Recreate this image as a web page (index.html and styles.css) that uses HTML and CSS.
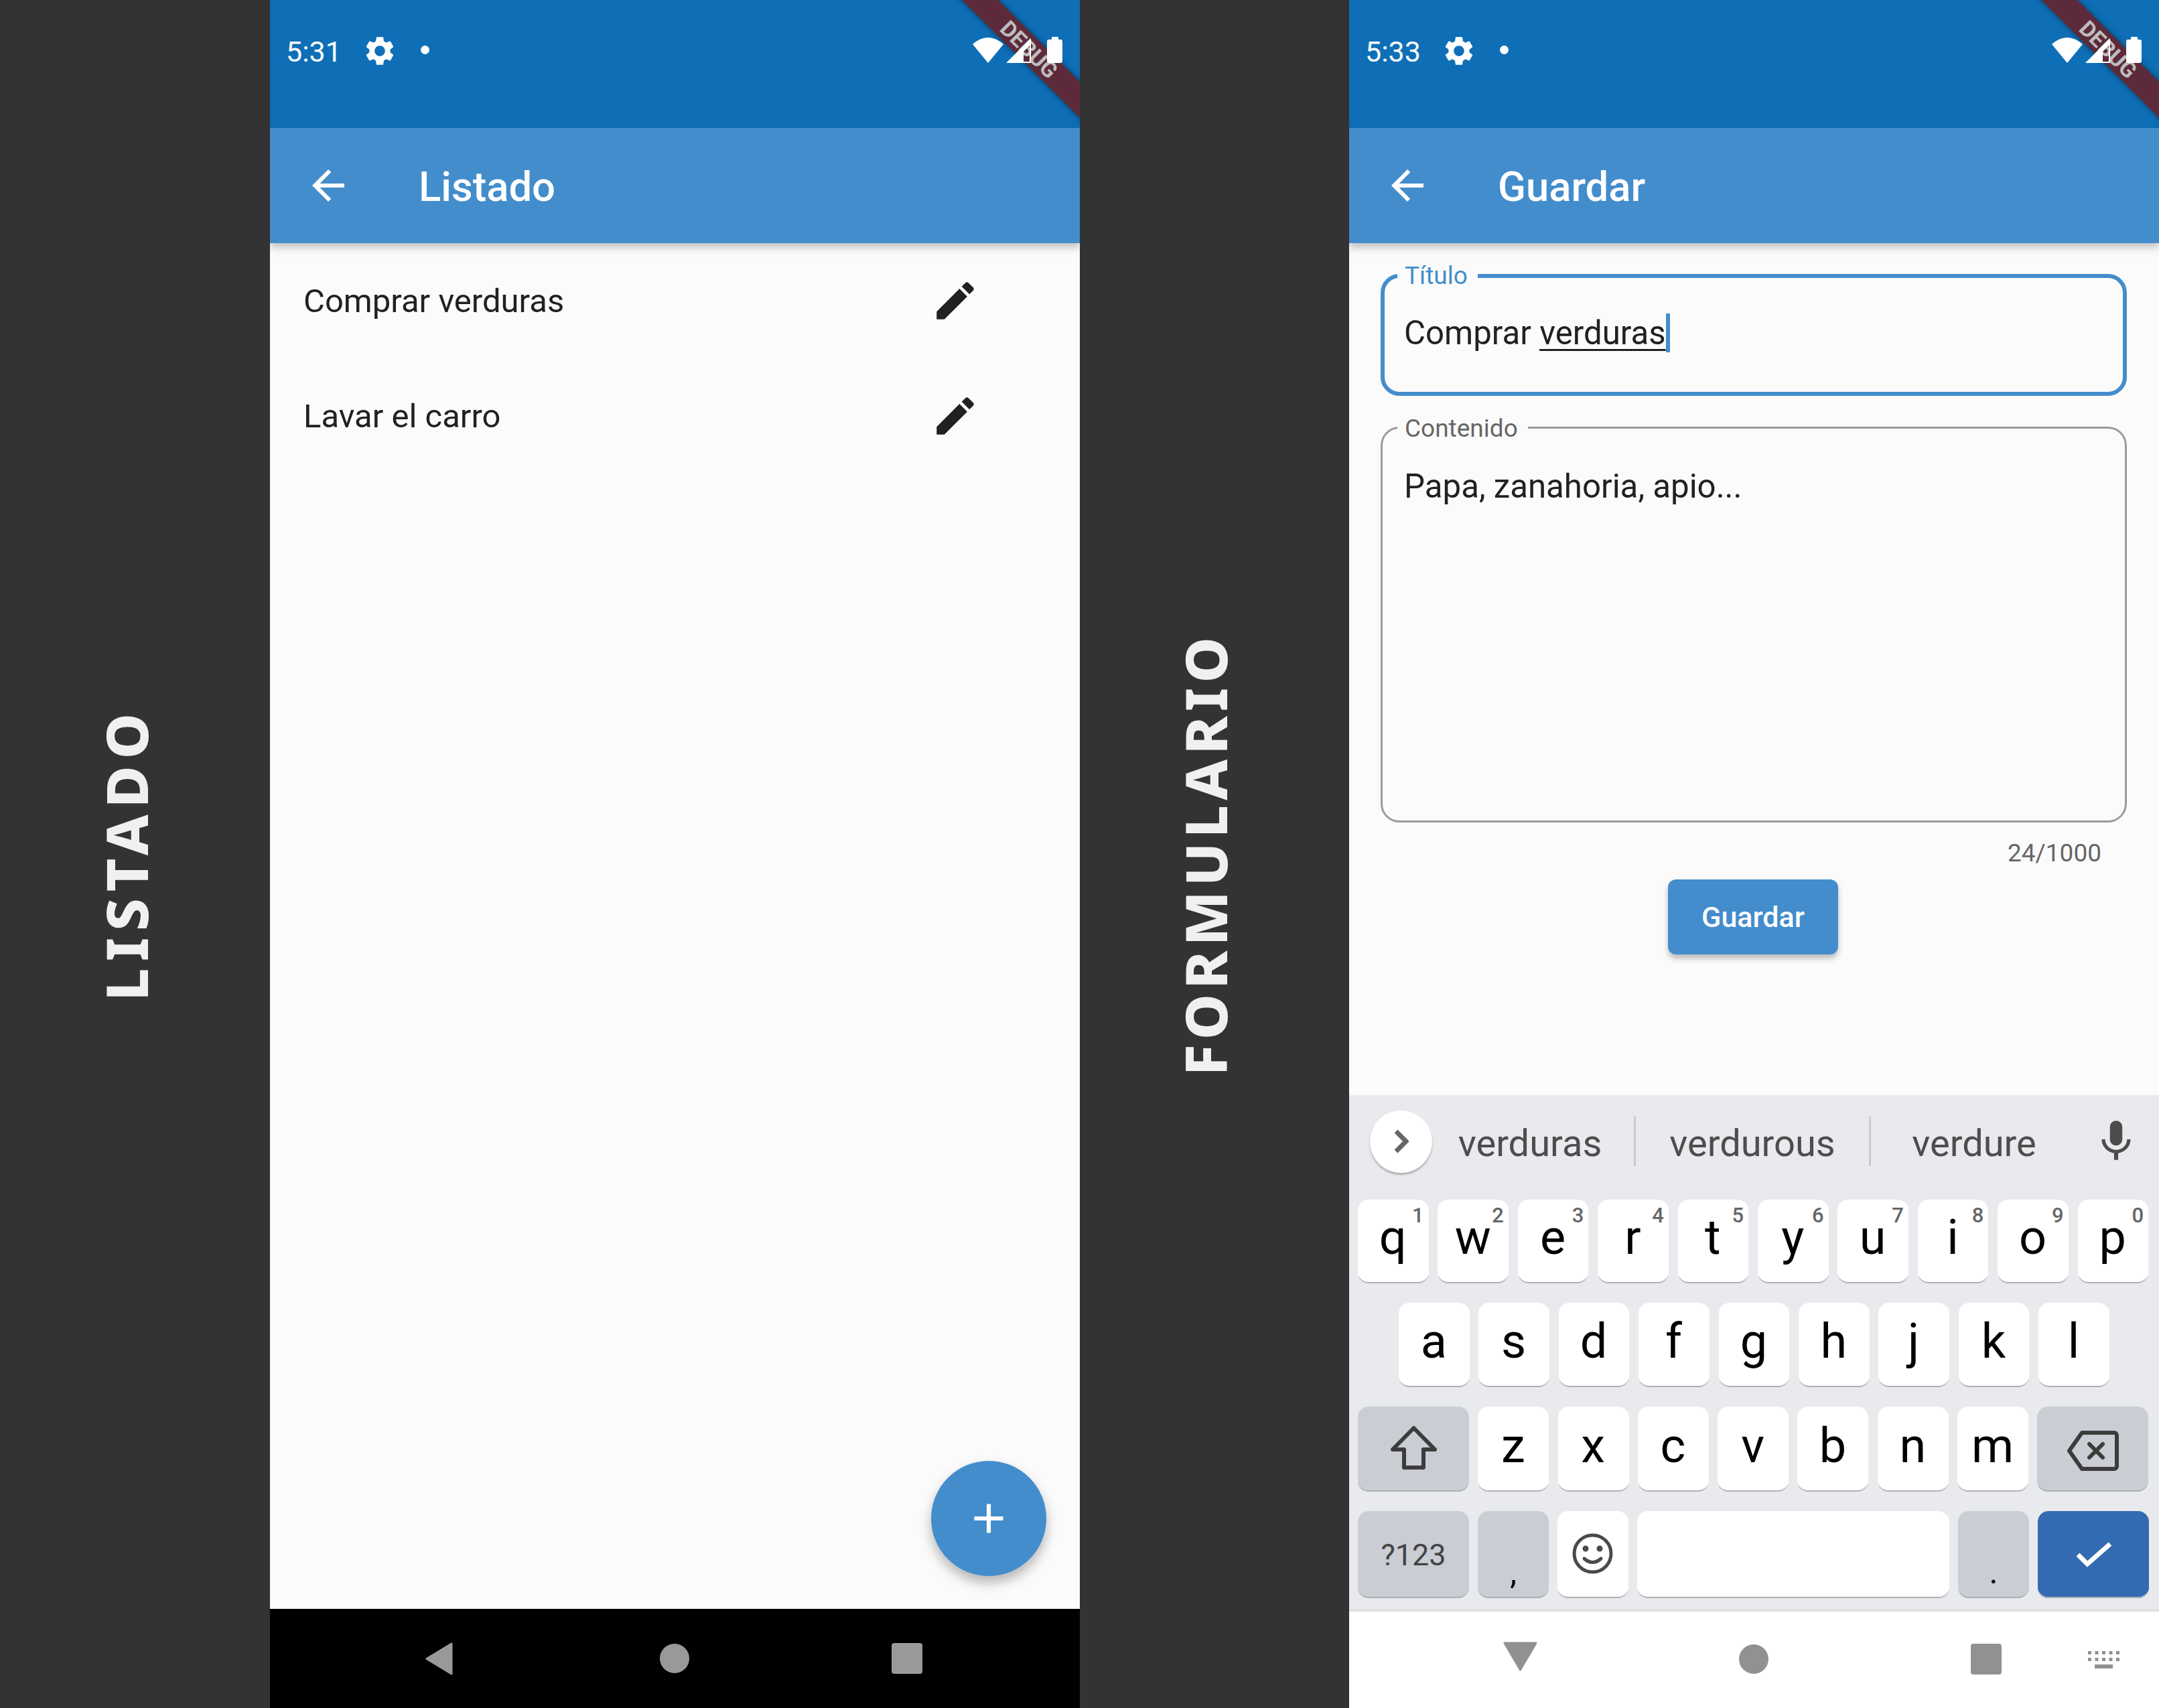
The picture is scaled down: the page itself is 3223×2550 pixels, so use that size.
FILE: index.html
```html
<!DOCTYPE html>
<html lang="es">
<head>
  <meta charset="UTF-8" />
  <title>Listado y formulario</title>
  <link rel="stylesheet" href="styles.css">
</head>
<body>
  <div class="lamina">
    <div class="rotulo rotulo-corto"><span>LISTADO</span></div>

    <!-- Pantalla 1: listado -->
    <section class="telefono">
      <div class="debug"><span>DEBUG</span></div>
      <div class="estado">
        <span class="hora">5:31</span>
        <svg class="engranaje" viewBox="0 0 24 24"><path d="M19.14 12.94c.04-.3.06-.61.06-.94 0-.32-.02-.64-.07-.94l2.03-1.58c.18-.14.23-.41.12-.61l-1.92-3.32c-.12-.22-.37-.29-.59-.22l-2.39.96c-.5-.38-1.03-.7-1.62-.94l-.36-2.54c-.04-.24-.24-.41-.48-.41h-3.84c-.24 0-.43.17-.47.41l-.36 2.54c-.59.24-1.13.57-1.62.94l-2.39-.96c-.22-.08-.47 0-.59.22L2.74 8.87c-.12.21-.08.47.12.61l2.03 1.58c-.05.3-.09.63-.09.94s.02.64.07.94l-2.03 1.58c-.18.14-.23.41-.12.61l1.92 3.32c.12.22.37.29.59.22l2.39-.96c.5.38 1.03.7 1.62.94l.36 2.54c.05.24.24.41.48.41h3.84c.24 0 .44-.17.47-.41l.36-2.54c.59-.24 1.13-.56 1.62-.94l2.39.96c.22.08.47 0 .59-.22l1.92-3.32c.12-.22.07-.47-.12-.61l-2.01-1.58zM12 15.6c-1.98 0-3.6-1.62-3.6-3.6s1.62-3.6 3.6-3.6 3.6 1.62 3.6 3.6-1.62 3.6-3.6 3.6z"/></svg>
        <span class="punto"></span>
        <svg class="senales" viewBox="0 0 134 40"><path d="M0 11Q23-9 46 11L23 39Z"/><path fill-rule="evenodd" d="M50 39L87 2V39ZM76 37H85V13L76 22Z"/><rect x="118" y="0" width="10" height="6" rx="1"/><rect x="111" y="4" width="23" height="35" rx="3"/></svg>
      </div>
      <header class="barra">
        <svg class="icono-barra" viewBox="0 0 24 24"><path d="M20 11H7.83l5.59-5.59L12 4l-8 8 8 8 1.41-1.41L7.83 13H20v-2z"/></svg>
        <h1>Listado</h1>
      </header>
      <main class="lista">
        <div class="fila">
          <span>Comprar verduras</span>
          <svg class="lapiz" viewBox="0 0 24 24"><path d="M3 17.25V21h3.75L17.81 9.94l-3.75-3.75L3 17.25zM20.71 7.04c.39-.39.39-1.02 0-1.41l-2.34-2.34c-.39-.39-1.02-.39-1.41 0l-1.83 1.83 3.75 3.75 1.83-1.83z"/></svg>
        </div>
        <div class="fila">
          <span>Lavar el carro</span>
          <svg class="lapiz" viewBox="0 0 24 24"><path d="M3 17.25V21h3.75L17.81 9.94l-3.75-3.75L3 17.25zM20.71 7.04c.39-.39.39-1.02 0-1.41l-2.34-2.34c-.39-.39-1.02-.39-1.41 0l-1.83 1.83 3.75 3.75 1.83-1.83z"/></svg>
        </div>
        <button class="fab"><svg viewBox="0 0 24 24"><path d="M19 13h-6v6h-2v-6H5v-2h6V5h2v6h6v2z"/></svg></button>
      </main>
      <nav class="nav nav-negra">
        <svg class="nav-atras" viewBox="0 0 42 49"><path d="M40 2V47L3 24.5Z"/></svg>
        <span class="nav-circulo"></span>
        <span class="nav-cuadro"></span>
      </nav>
    </section>

    <div class="rotulo"><span>FORMULARIO</span></div>

    <!-- Pantalla 2: formulario -->
    <section class="telefono">
      <div class="debug"><span>DEBUG</span></div>
      <div class="estado">
        <span class="hora">5:33</span>
        <svg class="engranaje" viewBox="0 0 24 24"><path d="M19.14 12.94c.04-.3.06-.61.06-.94 0-.32-.02-.64-.07-.94l2.03-1.58c.18-.14.23-.41.12-.61l-1.92-3.32c-.12-.22-.37-.29-.59-.22l-2.39.96c-.5-.38-1.03-.7-1.62-.94l-.36-2.54c-.04-.24-.24-.41-.48-.41h-3.84c-.24 0-.43.17-.47.41l-.36 2.54c-.59.24-1.13.57-1.62.94l-2.39-.96c-.22-.08-.47 0-.59.22L2.74 8.87c-.12.21-.08.47.12.61l2.03 1.58c-.05.3-.09.63-.09.94s.02.64.07.94l-2.03 1.58c-.18.14-.23.41-.12.61l1.92 3.32c.12.22.37.29.59.22l2.39-.96c.5.38 1.03.7 1.62.94l.36 2.54c.05.24.24.41.48.41h3.84c.24 0 .44-.17.47-.41l.36-2.54c.59-.24 1.13-.56 1.62-.94l2.39.96c.22.08.47 0 .59-.22l1.92-3.32c.12-.22.07-.47-.12-.61l-2.01-1.58zM12 15.6c-1.98 0-3.6-1.62-3.6-3.6s1.62-3.6 3.6-3.6 3.6 1.62 3.6 3.6-1.62 3.6-3.6 3.6z"/></svg>
        <span class="punto"></span>
        <svg class="senales" viewBox="0 0 134 40"><path d="M0 11Q23-9 46 11L23 39Z"/><path fill-rule="evenodd" d="M50 39L87 2V39ZM76 37H85V13L76 22Z"/><rect x="118" y="0" width="10" height="6" rx="1"/><rect x="111" y="4" width="23" height="35" rx="3"/></svg>
      </div>
      <header class="barra">
        <svg class="icono-barra" viewBox="0 0 24 24"><path d="M20 11H7.83l5.59-5.59L12 4l-8 8 8 8 1.41-1.41L7.83 13H20v-2z"/></svg>
        <h1>Guardar</h1>
      </header>
      <main class="formulario">
        <div class="campo campo-activo">
          <label class="etiqueta">Título</label>
          <div class="valor">Comprar <u>verduras</u><i class="cursor"></i></div>
        </div>
        <div class="campo campo-grande">
          <label class="etiqueta">Contenido</label>
          <div class="valor">Papa, zanahoria, apio...</div>
        </div>
        <div class="contador">24/1000</div>
        <button class="guardar">Guardar</button>
      </main>

      <div class="teclado">
        <div class="sugerencias">
          <span class="expandir"><svg viewBox="0 0 22 36"><path d="M3 3L18 18L3 33"/></svg></span>
          <span class="sugerencia sugerencia-1">verduras</span>
          <span class="sugerencia">verdurous</span>
          <span class="sugerencia">verdure</span>
          <svg class="mic" viewBox="0 0 24 24"><path d="M12 14c1.66 0 2.99-1.34 2.99-3L15 5c0-1.66-1.34-3-3-3S9 3.34 9 5v6c0 1.66 1.34 3 3 3zm5.3-3c0 3-2.54 5.1-5.3 5.1S6.7 14 6.7 11H5c0 3.41 2.72 6.23 6 6.72V21h2v-3.28c3.28-.48 6-3.3 6-6.72h-1.7z"/></svg>
        </div>
        <div class="teclas fila-1">
          <span class="tecla">q<sup>1</sup></span>
          <span class="tecla">w<sup>2</sup></span>
          <span class="tecla">e<sup>3</sup></span>
          <span class="tecla">r<sup>4</sup></span>
          <span class="tecla">t<sup>5</sup></span>
          <span class="tecla">y<sup>6</sup></span>
          <span class="tecla">u<sup>7</sup></span>
          <span class="tecla">i<sup>8</sup></span>
          <span class="tecla">o<sup>9</sup></span>
          <span class="tecla">p<sup>0</sup></span>
        </div>
        <div class="teclas fila-2">
          <span class="tecla">a</span>
          <span class="tecla">s</span>
          <span class="tecla">d</span>
          <span class="tecla">f</span>
          <span class="tecla">g</span>
          <span class="tecla">h</span>
          <span class="tecla">j</span>
          <span class="tecla">k</span>
          <span class="tecla">l</span>
        </div>
        <div class="teclas fila-3">
          <span class="tecla ancha gris"><svg class="shift" viewBox="0 0 69 65"><path d="M34.5 3L66 35H49V62H20V35H3Z"/></svg></span>
          <span class="tecla">z</span>
          <span class="tecla">x</span>
          <span class="tecla">c</span>
          <span class="tecla">v</span>
          <span class="tecla">b</span>
          <span class="tecla">n</span>
          <span class="tecla">m</span>
          <span class="tecla ancha gris"><svg class="borrar" viewBox="0 0 77 60"><path d="M3 30L22 3H70a4 4 0 0 1 4 4V53a4 4 0 0 1-4 4H22Z"/><path d="M33 20L53 40M53 20L33 40"/></svg></span>
        </div>
        <div class="teclas fila-4">
          <span class="tecla ancha gris numeros">?123</span>
          <span class="tecla gris signo">,</span>
          <span class="tecla tecla-emoji"><svg class="emoji" viewBox="0 0 61 61"><circle class="cara" cx="30.5" cy="30.5" r="27.5"/><circle cx="20" cy="23" r="4.5"/><circle cx="41" cy="23" r="4.5"/><path class="sonrisa" d="M18 38Q30.5 49 43 38"/></svg></span>
          <span class="tecla espacio"></span>
          <span class="tecla gris signo">.</span>
          <span class="tecla ancha listo"><svg class="check" viewBox="0 0 53 40"><path d="M3 20L17 34L51 4"/></svg></span>
        </div>
      </div>

      <nav class="nav nav-blanca">
        <svg class="nav-abajo" viewBox="0 0 51 44"><path d="M2 2H49L25.5 42Z"/></svg>
        <span class="nav-circulo"></span>
        <span class="nav-cuadro"></span>
        <svg class="nav-teclado" viewBox="0 0 47 26"><path d="M0 0h5v5H0zM10.5 0h5v5h-5zM21 0h5v5h-5zM31.5 0h5v5h-5zM42 0h5v5h-5zM0 10h5v5H0zM10.5 10h5v5h-5zM21 10h5v5h-5zM31.5 10h5v5h-5zM42 10h5v5h-5zM10 20h27v6H10z"/></svg>
      </nav>
    </section>
  </div>
</body>
</html>
```

FILE: styles.css
```css
* {
  box-sizing: border-box;
}

html, body {
  margin: 0;
  padding: 0;
  background: #333333;
  overflow: hidden;
}

body {
  font-family: Roboto, "Liberation Sans", sans-serif;
  color: #212121;
}

.lamina {
  display: grid;
  grid-template-columns: 403px 1209px 402px 1209px;
  width: 3223px;
  height: 2550px;
}

/* Rotulos verticales */
.rotulo {
  display: flex;
  align-items: center;
  justify-content: center;
  padding-right: 28px;
}

.rotulo span {
  writing-mode: vertical-rl;
  transform: rotate(180deg);
  font-family: "Noto Sans", sans-serif;
  font-weight: 800;
  font-size: 86px;
  letter-spacing: 7.2px;
  line-height: 1;
  color: #f0f0f0;
}

.rotulo-corto span {
  letter-spacing: 10px;
}

/* Telefono */
.telefono {
  position: relative;
  display: flex;
  flex-direction: column;
  height: 2550px;
  overflow: hidden;
  background: #fbfbfb;
}

.debug {
  position: absolute;
  top: 53px;
  left: 962px;
  width: 340px;
  height: 38px;
  display: flex;
  align-items: center;
  justify-content: center;
  padding-left: 4px;
  transform: rotate(45deg);
  background: #5d2a3c;
  box-shadow: 0 0 10px rgba(0, 0, 0, 0.5);
  z-index: 1;
}

.debug span {
  font-size: 33px;
  font-weight: 700;
  color: #bdbdbd;
}

.estado {
  display: flex;
  align-items: flex-start;
  height: 191px;
  padding: 36px 26px 0 24px;
  background: #0e6fb7;
  color: #fff;
}

.hora {
  position: relative;
  z-index: 2;
  font-size: 43px;
  line-height: 82px;
  width: 114px;
}

.engranaje {
  position: relative;
  z-index: 2;
  width: 52px;
  height: 52px;
  margin-top: 14px;
  fill: #fff;
}

.punto {
  width: 13px;
  height: 13px;
  margin: 32px 0 0 35px;
  border-radius: 50%;
  background: #fff;
}

.senales {
  position: relative;
  z-index: 2;
  width: 134px;
  height: 40px;
  margin: 19px 0 0 auto;
  fill: #fff;
}

.barra {
  position: relative;
  z-index: 1;
  display: flex;
  align-items: center;
  height: 172px;
  padding-left: 51px;
  background: #438dcc;
  color: #fff;
  box-shadow: 0 6px 12px rgba(0, 0, 0, 0.25);
}

.icono-barra {
  width: 72px;
  height: 72px;
  fill: #fff;
}

.barra h1 {
  margin: 0 0 0 99px;
  padding-top: 3px;
  font-size: 61.6px;
  font-weight: 500;
}

/* Listado */
.lista {
  position: relative;
  flex: 1;
}

.fila {
  display: flex;
  align-items: center;
  justify-content: space-between;
  height: 172px;
  padding: 0 149px 0 50px;
  font-size: 49px;
}

.lapiz {
  width: 74px;
  height: 74px;
  fill: #212121;
}

.fab {
  position: absolute;
  right: 50px;
  bottom: 49px;
  display: flex;
  align-items: center;
  justify-content: center;
  width: 172px;
  height: 172px;
  padding: 0;
  border: 0;
  border-radius: 50%;
  background: #438dcc;
  box-shadow: 0 10px 18px rgba(0, 0, 0, 0.28);
}

.fab svg {
  width: 74px;
  height: 74px;
  fill: #fff;
}

/* Formulario */
.formulario {
  flex: 1;
  display: flex;
  flex-direction: column;
  padding: 46px 48px 0 47px;
}

.campo {
  position: relative;
  border: 3px solid #9b9b9b;
  border-radius: 28px;
}

.campo-activo {
  height: 182px;
  padding: 53px 29px 0;
  border: 6px solid #438dcc;
}

.campo-grande {
  height: 591px;
  margin-top: 46px;
  padding: 57px 32px 0;
}

.etiqueta {
  position: absolute;
  top: -22px;
  left: 22px;
  padding: 0 15px 0 11px;
  font-size: 37px;
  line-height: 44px;
  background: #fbfbfb;
  color: #666;
}

.campo-activo .etiqueta {
  top: -25px;
  left: 19px;
  color: #438dcc;
}

.valor {
  font-size: 49.2px;
  line-height: 58px;
}

.valor u {
  text-decoration-thickness: 3px;
  text-underline-offset: 7px;
  text-decoration-skip-ink: none;
}

.cursor {
  display: inline-block;
  width: 6px;
  height: 58px;
  vertical-align: -12px;
  background: #438dcc;
}

.contador {
  margin-top: 24px;
  padding-right: 38px;
  text-align: right;
  font-size: 37px;
  line-height: 44px;
  color: #666;
}

.guardar {
  align-self: center;
  width: 254px;
  height: 112px;
  margin-top: 17px;
  margin-right: 2px;
  border: 0;
  border-radius: 12px;
  background: #438dcc;
  color: #fff;
  font-family: Roboto, sans-serif;
  font-size: 43px;
  font-weight: 500;
  box-shadow: 0 6px 8px rgba(0, 0, 0, 0.25);
}

/* Teclado */
.teclado {
  height: 771px;
  padding: 0 14px 20px 13px;
  background: #e8eaed;
  border-bottom: 4px solid #e0e0e0;
}

.sugerencias {
  display: flex;
  align-items: center;
  height: 156px;
  padding: 0 0 18px 18px;
  margin-right: -14px;
  font-size: 56px;
  color: #4d4d4d;
}

.expandir {
  display: flex;
  align-items: center;
  justify-content: center;
  flex: none;
  width: 93px;
  height: 93px;
  border-radius: 50%;
  background: #fff;
  box-shadow: 0 3px 3px rgba(0, 0, 0, 0.25);
}

.expandir svg {
  width: 22px;
  height: 36px;
  fill: none;
  stroke: #666;
  stroke-width: 7;
}

.sugerencia {
  display: flex;
  align-items: center;
  justify-content: center;
  flex: none;
  width: 351px;
  height: 74px;
  padding-top: 5px;
  border-left: 3px solid #c8cacf;
}

.sugerencia:last-of-type {
  width: 311px;
}

.sugerencia-1 {
  width: 301px;
  padding-right: 9px;
  border-left: 0;
}

.mic {
  flex: none;
  width: 74px;
  height: 74px;
  margin-left: 21px;
  fill: #4d4d4d;
}

.teclas {
  display: flex;
  gap: 13.8px;
  margin-bottom: 29px;
}

.fila-1 { height: 125px; }
.fila-2 { height: 126px; padding-left: 61px; }
.fila-3 { height: 127px; gap: 13.3px; }
.fila-4 { height: 130px; gap: 13.3px; margin-bottom: 0; }

.tecla {
  position: relative;
  display: flex;
  align-items: center;
  justify-content: center;
  flex: none;
  width: 105.6px;
  padding: 0 1px 12px 0;
  border-radius: 16px;
  background: #fff;
  box-shadow: inset 0 -3px 0 -1px #aeb0b4;
  font-size: 72px;
  color: #000;
}

.fila-3 .tecla {
  width: 106px;
  padding-bottom: 10px;
}

.tecla sup {
  position: absolute;
  top: 6px;
  right: 7px;
  font-size: 31px;
  line-height: 36px;
  font-weight: 500;
  color: #666;
}

.tecla.ancha {
  width: 166px;
  padding: 0;
}

.gris {
  background: #cacdd4;
}

.espacio {
  width: 466px;
}

.numeros {
  font-size: 45px;
  color: #444;
}

.signo {
  padding: 52px 0 0;
  font-size: 50px;
}

.tecla-emoji {
  padding: 0 0 3px;
}

.listo {
  background: #336bb2;
}

.shift {
  width: 69px;
  height: 65px;
  margin-bottom: 4px;
  fill: none;
  stroke: #3c3c3c;
  stroke-width: 6;
  stroke-linejoin: round;
}

.borrar {
  width: 77px;
  height: 60px;
  margin-top: 5px;
  fill: none;
  stroke: #3c3c3c;
  stroke-width: 6;
  stroke-linejoin: round;
  stroke-linecap: round;
}

.emoji {
  width: 61px;
  height: 61px;
  fill: #4a4a4a;
}

.emoji .cara,
.emoji .sonrisa {
  fill: none;
  stroke: #4a4a4a;
  stroke-width: 5;
  stroke-linecap: round;
}

.check {
  width: 53px;
  height: 40px;
  fill: none;
  stroke: #fff;
  stroke-width: 7;
}

/* Barras de navegacion */
.nav {
  display: flex;
  align-items: center;
  flex: none;
}

.nav-negra {
  height: 148px;
  padding-left: 231px;
  background: #000;
  fill: #999;
}

.nav-blanca {
  height: 144px;
  padding-left: 230px;
  background: #fff;
  fill: #919191;
}

.nav-atras {
  width: 42px;
  height: 49px;
  stroke: #999;
  stroke-width: 3;
  stroke-linejoin: round;
}

.nav-abajo {
  width: 51px;
  height: 44px;
  margin-bottom: 10px;
  stroke: #919191;
  stroke-width: 3;
  stroke-linejoin: round;
}

.nav-circulo {
  width: 44px;
  height: 44px;
  margin-left: 309px;
  border-radius: 50%;
  background: #999;
}

.nav-cuadro {
  width: 46px;
  height: 46px;
  margin-left: 302px;
  border-radius: 4px;
  background: #999;
}

.nav-blanca .nav-circulo {
  margin-left: 301px;
  margin-top: -2px;
  background: #919191;
}

.nav-blanca .nav-cuadro {
  margin-top: -2px;
  background: #919191;
}

.nav-teclado {
  width: 47px;
  height: 26px;
  margin-left: 129px;
}
```
